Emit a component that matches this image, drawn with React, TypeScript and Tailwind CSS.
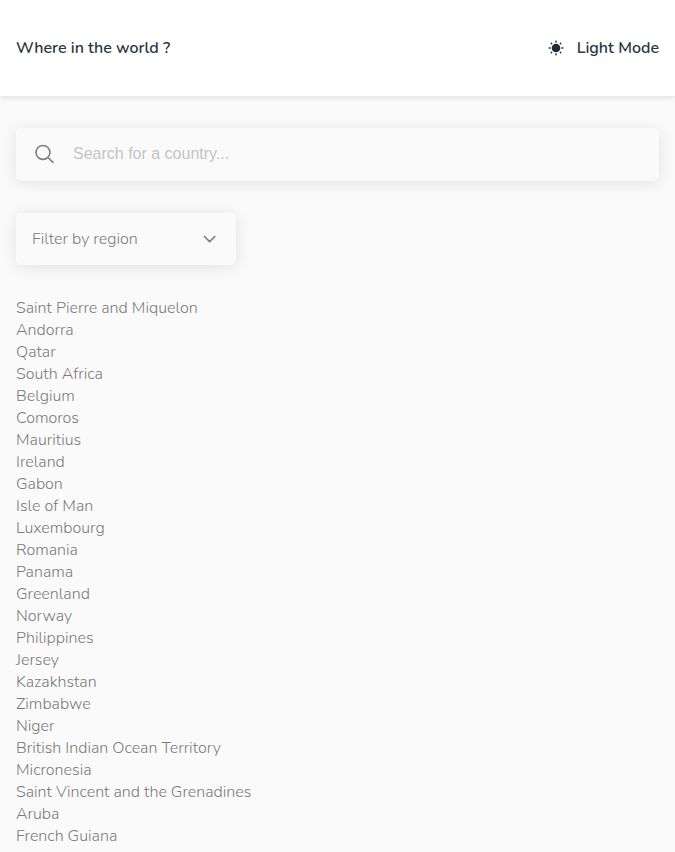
import { useState } from 'react';

const countries = [
  'Saint Pierre and Miquelon', 'Andorra', 'Qatar', 'South Africa', 'Belgium',
  'Comoros', 'Mauritius', 'Ireland', 'Gabon', 'Isle of Man', 'Luxembourg',
  'Romania', 'Panama', 'Greenland', 'Norway', 'Philippines', 'Jersey',
  'Kazakhstan', 'Zimbabwe', 'Niger', 'British Indian Ocean Territory',
  'Micronesia', 'Saint Vincent and the Grenadines', 'Aruba', 'French Guiana',
];

const regions = ['Africa', 'America', 'Asia', 'Europe', 'Oceania'];

function SunIcon() {
  return (
    <svg viewBox="0 0 16 16" className="size-4" fill="none" stroke="currentColor" strokeWidth="1.5" strokeLinecap="round" aria-hidden="true">
      <circle cx="8" cy="8" r="4.3" fill="currentColor" stroke="none" />
      <path d="M8 1.2v.9M8 13.9v.9M1.2 8h.9M13.9 8h.9M3.3 3.3l.3.3M12.4 12.4l.3.3M3.3 12.7l.3-.3M12.4 3.6l.3-.3" />
    </svg>
  );
}

function SearchIcon() {
  return (
    <svg viewBox="0 0 20 20" className="size-[19px] shrink-0 text-[#808080]" fill="none" stroke="currentColor" strokeWidth="1.7" aria-hidden="true">
      <circle cx="8.4" cy="8.9" r="7.3" />
      <path d="M13.7 14.2l5.2 5.2" strokeLinecap="round" />
    </svg>
  );
}

function ChevronIcon() {
  return (
    <svg viewBox="0 0 14 14" className="pointer-events-none absolute right-[19px] size-3.5 text-[#808080]" fill="none" stroke="currentColor" strokeWidth="1.7" strokeLinecap="round" strokeLinejoin="round" aria-hidden="true">
      <path d="M1.4 4.5L6.6 9.6l5.2-5.1" />
    </svg>
  );
}

export default function App() {
  const [query, setQuery] = useState('');
  const [region, setRegion] = useState('');
  const shown = countries.filter((name) => name.toLowerCase().includes(query.toLowerCase()));

  return (
    <div className="min-h-screen bg-[#fafafa] font-[Nunito,Lato,sans-serif] text-base font-light text-[#7b7b7b]">
      <header className="flex h-24 items-center justify-between bg-white px-4 font-semibold text-[#202c37] shadow-[0_2px_6px_rgba(0,0,0,0.10)]">
        <h1 className="text-[#2b3742]">Where in the world ?</h1>
        <button type="button" className="flex items-center gap-[13px]">
          <SunIcon />
          <span className="text-[#2b3742]">Light Mode</span>
        </button>
      </header>
      <main className="flex flex-col gap-8 px-4 pt-8">
        <label className="flex h-[53px] items-center gap-[19px] rounded-[5px] px-[19px] pb-0.5 shadow-[0_2px_16px_rgba(0,0,0,0.10)]">
          <SearchIcon />
          <input
            type="text"
            aria-label="Search for a country"
            placeholder="Search for a country..."
            value={query}
            onChange={(event) => setQuery(event.target.value)}
            className="min-w-0 flex-1 bg-transparent font-['Liberation_Sans',Arial,sans-serif] font-normal outline-none placeholder:text-[#c4c4c4]"
          />
        </label>
        <div className="relative flex h-[52px] w-[220px] items-center rounded-[5px] shadow-[0_2px_16px_rgba(0,0,0,0.10)]">
          <select
            aria-label="Filter by region"
            value={region}
            onChange={(event) => setRegion(event.target.value)}
            className="size-full appearance-none bg-transparent px-4 outline-none"
          >
            <option value="">Filter by region</option>
            {regions.map((name) => (
              <option key={name}>{name}</option>
            ))}
          </select>
          <ChevronIcon />
        </div>
        <ul className="leading-[22px]">
          {shown.map((name) => (
            <li key={name}>{name}</li>
          ))}
        </ul>
      </main>
    </div>
  );
}
